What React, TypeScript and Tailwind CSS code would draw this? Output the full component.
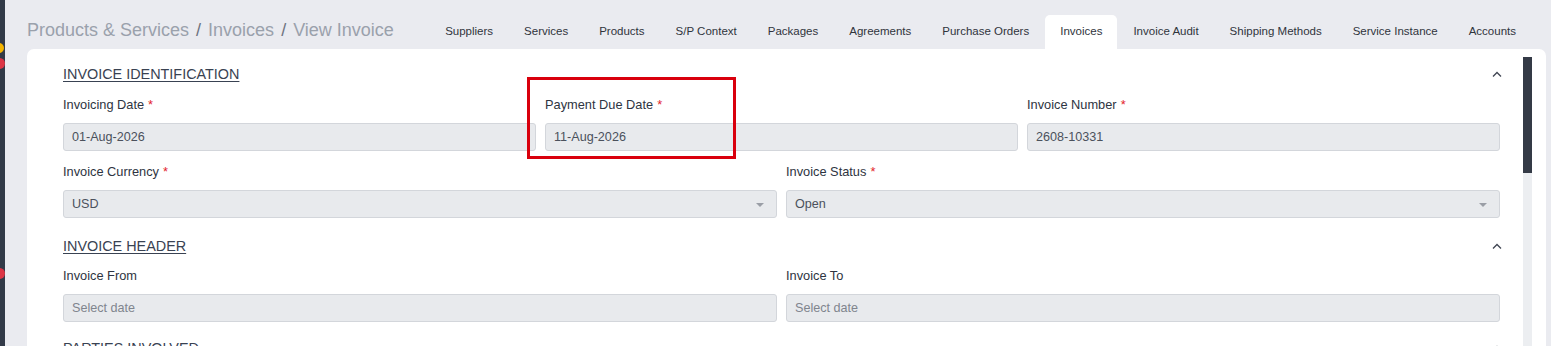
import { ReactNode } from "react";

const TABS = [
  "Suppliers",
  "Services",
  "Products",
  "S/P Context",
  "Packages",
  "Agreements",
  "Purchase Orders",
  "Invoices",
  "Invoice Audit",
  "Shipping Methods",
  "Service Instance",
  "Accounts",
];

function Chevron() {
  return (
    <svg width="10" height="6" viewBox="0 0 10 6" fill="none" stroke="#3f4552" strokeWidth="1.3">
      <path d="M1 5.5 5 1.5 9 5.5" />
    </svg>
  );
}

function SectionTitle({ title }: { title: string }) {
  return (
    <div className="flex h-[18px] items-center justify-between">
      <span className="text-[14.4px] uppercase leading-[18px] text-[#394252] underline decoration-[1px] underline-offset-[2px]">
        {title}
      </span>
      <span className="mr-[-2px] flex items-center">
        <Chevron />
      </span>
    </div>
  );
}

function Label({ text, required }: { text: string; required?: boolean }) {
  return (
    <div className="h-[16px] text-[12.8px] leading-[16px] text-[#2e3441]">
      {text}
      {required && <span className="ml-[4px] text-[#e3242b]">*</span>}
    </div>
  );
}

function Input({ value, placeholder, select }: { value?: string; placeholder?: string; select?: boolean }) {
  return (
    <div className="relative mt-[10px] flex h-[28px] items-center rounded-[3px] border border-[#d3d6db] bg-[#e8eaed] px-[8px] text-[12.6px]">
      {value ? (
        <span className="text-[#4b515c]">{value}</span>
      ) : (
        <span className="text-[#80858e]">{placeholder}</span>
      )}
      {select && (
        <span className="absolute right-[12px] top-[12px] h-0 w-0 border-x-[4px] border-t-[4px] border-x-transparent border-t-[#9a9ea6]" />
      )}
    </div>
  );
}

function Field({ label, required, children }: { label: string; required?: boolean; children: ReactNode }) {
  return (
    <div className="flex min-w-0 flex-col">
      <Label text={label} required={required} />
      {children}
    </div>
  );
}

export default function App() {
  return (
    <div
      className="relative flex h-[346px] w-[1551px] overflow-hidden bg-[#eaebf0]"
      style={{ fontFamily: '"Liberation Sans", Arial, sans-serif' }}
    >
      <div className="w-[5px] shrink-0 bg-[#323a48]" />
      <span className="absolute left-[-6px] top-[43px] h-[10px] w-[10px] rounded-full bg-[#f4b400]" />
      <span className="absolute left-[-6px] top-[58px] h-[11px] w-[11px] rounded-full bg-[#dc3545]" />
      <span className="absolute left-[-6px] top-[268px] h-[11px] w-[11px] rounded-full bg-[#dc3545]" />

      <div className="flex min-w-0 flex-1 flex-col pl-[22px] pr-[5px]">
        <header className="flex h-[49px] shrink-0 items-end justify-between">
          <div className="mb-[8px] flex items-center text-[18px] leading-[22px] text-[#9aa1ac]">
            <span>Products &amp; Services</span>
            <span className="mx-[7px] text-[#6e7480]">/</span>
            <span>Invoices</span>
            <span className="mx-[7px] text-[#6e7480]">/</span>
            <span>View Invoice</span>
          </div>
          <nav className="mr-[15px] flex items-end gap-[1px]">
            {TABS.map((tab, i) => (
              <div
                key={tab}
                className={`flex h-[34px] items-center px-[15px] pb-[1px] text-[11.5px] text-[#30343c] ${
                  i === 7 ? "rounded-t-[5px] bg-white" : ""
                }`}
              >
                {tab}
              </div>
            ))}
          </nav>
        </header>

        <div className="flex flex-1 rounded-[7px] bg-white">
          <div className="min-w-0 flex-1 pl-[36px] pr-[23px] pt-[16px]">
            <SectionTitle title="Invoice Identification" />
            <div className="mt-[14px] grid grid-cols-3 gap-x-[9px]">
              <Field label="Invoicing Date" required>
                <Input value="01-Aug-2026" />
              </Field>
              <div className="relative">
                <Field label="Payment Due Date" required>
                  <Input value="11-Aug-2026" />
                </Field>
                <div className="pointer-events-none absolute left-[-18px] top-[-20px] h-[82px] w-[209px] border-[3px] border-[#d9000d]" />
              </div>
              <Field label="Invoice Number" required>
                <Input value="2608-10331" />
              </Field>
            </div>
            <div className="mt-[13px] grid grid-cols-2 gap-x-[9px]">
              <Field label="Invoice Currency" required>
                <Input value="USD" select />
              </Field>
              <Field label="Invoice Status" required>
                <Input value="Open" select />
              </Field>
            </div>

            <div className="mt-[19px]">
              <SectionTitle title="Invoice Header" />
            </div>
            <div className="mt-[13px] grid grid-cols-2 gap-x-[9px]">
              <Field label="Invoice From">
                <Input placeholder="Select date" />
              </Field>
              <Field label="Invoice To">
                <Input placeholder="Select date" />
              </Field>
            </div>

            <div className="mt-[17px]">
              <SectionTitle title="Parties Involved" />
            </div>
          </div>

          <div className="mt-[8px] flex w-[9px] shrink-0 flex-col bg-[#eceef1]">
            <div className="h-[116px] bg-[#343a46]" />
          </div>
          <div className="w-[14px] shrink-0" />
        </div>
      </div>
    </div>
  );
}
